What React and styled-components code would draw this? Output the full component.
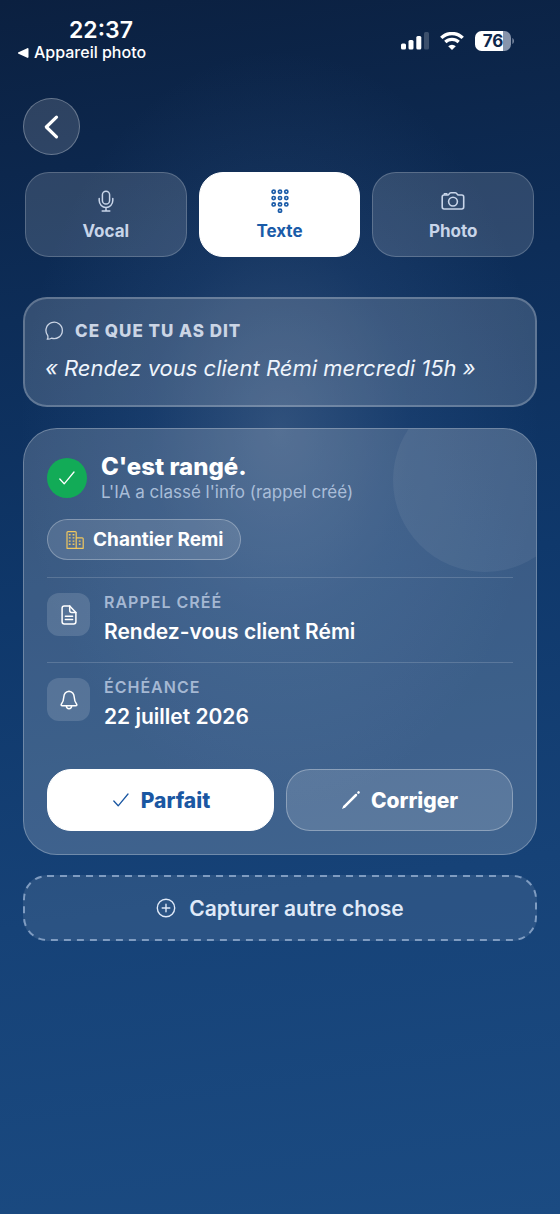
import React, { useState } from "react";
import { createGlobalStyle, styled } from "styled-components";

const MicIcon = () => (
  <Icon width="24" height="24" viewBox="0 0 24 24" strokeWidth="1.5">
    <rect x="8.4" y="2.2" width="7.2" height="12.8" rx="3.6" />
    <path d="M5.2 9.4v2.200a6.800 6.800 0 0 0 13.600 0V9.400M12 18.400v3.600M8.200 22h7.600" />
  </Icon>
);

const KeypadIcon = () => {
  const dots = [2.8, 9.1, 15.4].flatMap((y) =>
    [5.7, 12, 18.3].map((x) => [x, y]),
  );
  return (
    <Icon width="24" height="24" viewBox="0 0 24 24" strokeWidth="1.7">
      {[...dots, [12, 21.7]].map(([x, y]) => (
        <circle key={`${x}-${y}`} cx={x} cy={y} r="1.6" />
      ))}
    </Icon>
  );
};

const CameraIcon = () => (
  <Icon width="24" height="24" viewBox="0 0 24 24" strokeWidth="1.6">
    <path d="M3 6h3.6c.8 0 1.200-.4 1.600-1.100.4-.8.9-1.200 1.700-1.200h4.400c.8 0 1.300.4 1.700 1.200.4.7.8 1.100 1.600 1.100h3.200c1.200 0 1.900.7 1.900 1.900v10.200c0 1.200-.7 1.900-1.900 1.900H3.100c-1.200 0-1.900-.7-1.900-1.900V7.900C1.200 6.700 1.900 6 3 6Z" />
    <path d="M3.400 5.300v-.6h2.400v.6" />
    <circle cx="12" cy="12.600" r="4.400" />
  </Icon>
);

const BubbleIcon = () => (
  <Icon width="20" height="20" viewBox="0 0 20 20" strokeWidth="1.3">
    <path d="M2.200 18.200c.9-.9.900-2.200.5-3.700A8.200 8.200 0 1 1 6.500 17.200c-1.300.8-2.800 1.100-4.300 1Z" />
  </Icon>
);

const CheckIcon = () => (
  <Icon width="20" height="20" viewBox="0 0 20 20" strokeWidth="1.3">
    <path d="m2.800 11 4.400 4.800L17 4" />
  </Icon>
);

const BuildingIcon = () => (
  <Icon width="20" height="20" viewBox="0 0 20 20" strokeWidth="1.200">
    <path d="M2 18.300V2.600c0-.7.300-1 1-1h7.200c.7 0 1 .3 1 1v15.700ZM11.200 7.800h6c.7 0 1 .3 1 1v9.500h-7Z" />
    <path
      d="M4.700 4v1.400M8.500 4v1.400M4.700 7.200v1.400M8.500 7.200v1.400M4.700 10.400v1.400M8.500 10.400v1.400M4.700 13.600V15M8.500 13.600V15M14.700 10.400v1.400M14.700 13.600V15"
      strokeWidth="1.800"
      strokeLinecap="butt"
    />
  </Icon>
);

const DocumentIcon = () => (
  <Icon width="22" height="22" viewBox="0 0 22 22" strokeWidth="1.5">
    <path d="M11.700 2H6.300C4.900 2 4.100 2.800 4.100 4.200v13.600c0 1.400.8 2.200 2.200 2.200h9.400c1.400 0 2.200-.8 2.200-2.200V8.400Z" />
    <path d="M11.700 2v4.500c0 1.300.6 1.900 1.900 1.900h4.300M7.400 12.200h7.200M7.400 15.600h7.200" />
  </Icon>
);

const BellIcon = () => (
  <Icon width="22" height="22" viewBox="0 0 22 22" strokeWidth="1.5">
    <path d="M11 2.200C7.700 2.600 6 4.800 5.800 8c-.2 3.600-.8 5-2.200 6.700-.9 1.100-.5 2.100.8 2.100h13.200c1.300 0 1.700-1 .8-2.100C17 13 16.400 11.600 16.200 8 16 4.800 14.300 2.600 11 2.200ZM8.300 17c.2 1.800 1.200 2.700 2.700 2.700s2.500-.9 2.700-2.700" />
  </Icon>
);

const PencilIcon = () => (
  <Icon width="20" height="20" viewBox="0 0 20 20" strokeWidth="2.500">
    <path d="M3.400 16.600 15 5M17.400 2.600l.2-.2" />
    <path d="m1 19 1.400-3.400 2 2Z" fill="currentColor" stroke="none" />
  </Icon>
);

const PlusCircleIcon = () => (
  <Icon width="20" height="20" viewBox="0 0 20 20" strokeWidth="1.400">
    <circle cx="10" cy="10" r="8.700" />
    <path d="M10 6.200v7.600M6.200 10h7.600" />
  </Icon>
);

const BackIcon = () => (
  <Icon width="28" height="28" viewBox="0 0 28 28" strokeWidth="3.200">
    <path d="M18.500 4.200 8.300 14l10.200 9.800" />
  </Icon>
);

const SignalIcon = () => (
  <svg width="28" height="18" viewBox="0 0 28 18" fill="#fff">
    <rect y="11.500" width="5" height="6" rx="1.500" />
    <rect x="7.500" y="8" width="5" height="9.500" rx="1.500" />
    <rect x="15.300" y="4" width="5" height="13.500" rx="1.500" />
    <rect x="23" width="5" height="17.500" rx="1.500" opacity=".2" />
  </svg>
);

const WifiIcon = () => (
  <svg width="24" height="18" viewBox="0 0 24 18" fill="none" stroke="#fff">
    <path d="M1.300 5.900a15.300 15.300 0 0 1 21.400 0" strokeWidth="3.400" />
    <path d="M5.300 10a9.600 9.600 0 0 1 13.400 0" strokeWidth="3.200" />
    <path d="M12 18 8.200 14.200a5.400 5.400 0 0 1 7.600 0Z" fill="#fff" stroke="none" />
  </svg>
);

const BatteryIcon = () => (
  <svg width="40" height="20" viewBox="0 0 40 20">
    <path d="M28 0h1.500a6.500 6.500 0 0 1 6.500 6.500v7a6.500 6.500 0 0 1-6.500 6.500H28Z" fill="#8794ab" />
    <path d="M28 0v20H6.500A6.500 6.500 0 0 1 0 13.500v-7A6.500 6.500 0 0 1 6.500 0Z" fill="#fff" />
    <path d="M37.300 7c2.300.8 2.300 5.200 0 6Z" fill="#75839c" />
    <BatteryText x="18" y="16" textAnchor="middle">
      76
    </BatteryText>
  </svg>
);

const tabs = [
  { id: "vocal", label: "Vocal", icon: <MicIcon /> },
  { id: "texte", label: "Texte", icon: <KeypadIcon /> },
  { id: "photo", label: "Photo", icon: <CameraIcon /> },
];

const details = [
  { label: "Rappel créé", value: "Rendez-vous client Rémi", icon: <DocumentIcon /> },
  { label: "Échéance", value: "22 juillet 2026", icon: <BellIcon /> },
];

const App = () => {
  const [activeTab, setActiveTab] = useState("texte");

  return (
    <>
      <GlobalStyle />
      <StatusBar>
        <Clock>
          <Time>22:37</Time>
          <ReturnLink href="#photo">
            <svg width="11" height="10" viewBox="0 0 11 10" fill="#fff">
              <path d="M.5 4.300 9.300.2c.7-.3 1.200 0 1.200.7v8.200c0 .7-.5 1-1.200.7L.5 5.700c-.7-.4-.7-1 0-1.400Z" />
            </svg>
            Appareil photo
          </ReturnLink>
        </Clock>
        <Indicators>
          <SignalIcon />
          <WifiIcon />
          <BatteryIcon />
        </Indicators>
      </StatusBar>

      <Main>
        <BackButton aria-label="Retour">
          <BackIcon />
        </BackButton>

        <Tabs>
          {tabs.map((tab) => (
            <Tab
              key={tab.id}
              $active={tab.id === activeTab}
              aria-pressed={tab.id === activeTab}
              onClick={() => setActiveTab(tab.id)}
            >
              {tab.icon}
              {tab.label}
            </Tab>
          ))}
        </Tabs>

        <QuoteCard>
          <QuoteTitle>
            <BubbleIcon />
            Ce que tu as dit
          </QuoteTitle>
          <Quote>« Rendez vous client Rémi mercredi 15h »</Quote>
        </QuoteCard>

        <ResultCard>
          <Halo />
          <ResultHeader>
            <Success>
              <CheckIcon />
            </Success>
            <div>
              <ResultTitle>C'est rangé.</ResultTitle>
              <ResultText>L'IA a classé l'info (rappel créé)</ResultText>
            </div>
          </ResultHeader>
          <Chip>
            <BuildingIcon />
            Chantier Remi
          </Chip>
          {details.map((detail) => (
            <Row key={detail.label}>
              <RowIcon>{detail.icon}</RowIcon>
              <div>
                <RowLabel>{detail.label}</RowLabel>
                <RowValue>{detail.value}</RowValue>
              </div>
            </Row>
          ))}
          <Actions>
            <ActionButton $primary>
              <CheckIcon />
              Parfait
            </ActionButton>
            <ActionButton>
              <PencilIcon />
              Corriger
            </ActionButton>
          </Actions>
        </ResultCard>

        <CaptureButton>
          <svg width="100%" height="100%" aria-hidden="true">
            <rect width="100%" height="100%" rx="24" />
          </svg>
          <PlusCircleIcon />
          Capturer autre chose
        </CaptureButton>
      </Main>
    </>
  );
};

export default App;

const GlobalStyle = createGlobalStyle`
  * {
    box-sizing: border-box;
  }

  body {
    margin: 0;
    min-height: 100vh;
    color: #fff;
    font-family: Inter, "Liberation Sans", sans-serif;
    background:
      radial-gradient(ellipse 260px 380px at 50% 430px, rgba(135, 160, 195, 0.28), rgba(90, 130, 185, 0.13) 50%, transparent),
      linear-gradient(172deg, #0b2040 0%, #0d2d58 25%, #0f386b 48%, #164277 72%, #1b4b82 100%);
  }

  button {
    color: inherit;
    font-family: inherit;
    cursor: pointer;
  }
`;

const Icon = styled.svg`
  flex-shrink: 0;
  fill: none;
  stroke: currentColor;
  stroke-linecap: round;
  stroke-linejoin: round;
`;

const StatusBar = styled.header`
  display: flex;
  justify-content: space-between;
  padding: 18px 45px 0 18px;
`;

const Clock = styled.div`
  display: flex;
  flex-direction: column;
  align-items: flex-start;
`;

const Time = styled.div`
  padding-left: 51px;
  font-size: 23px;
  font-weight: 600;
  line-height: 25px;
`;

const ReturnLink = styled.a`
  display: flex;
  align-items: center;
  gap: 5px;
  color: #fff;
  font-size: 16px;
  font-weight: 500;
  line-height: 19px;
  text-decoration: none;
`;

const Indicators = styled.div`
  display: flex;
  align-items: center;
  gap: 11px;
  padding-top: 2px;
`;

const BatteryText = styled.text`
  fill: #0d274b;
  font-size: 17px;
  font-weight: 700;
`;

const Main = styled.main`
  display: flex;
  flex-direction: column;
  padding: 36px 23px 24px;
`;

const BackButton = styled.button`
  display: flex;
  align-items: center;
  justify-content: center;
  width: 57px;
  height: 57px;
  padding: 0;
  border: 1px solid rgba(255, 255, 255, 0.28);
  border-radius: 50%;
  background-color: rgba(255, 255, 255, 0.14);
`;

const Tabs = styled.div`
  display: flex;
  gap: 12px;
  margin: 17px 3px 40px 2px;
`;

const Tab = styled.button`
  display: flex;
  flex: 1;
  flex-direction: column;
  align-items: center;
  gap: 7px;
  padding: 16px 0 14px;
  border: 1px solid ${(props) => (props.$active ? "#fff" : "rgba(255, 255, 255, 0.2)")};
  border-radius: 24px;
  background-color: ${(props) => (props.$active ? "#fff" : "rgba(255, 255, 255, 0.14)")};
  && {
    color: ${(props) => (props.$active ? "#1a5ba8" : "#c8d5e9")};
  }
  font-size: 17px;
  font-weight: 700;
  line-height: 22px;
`;

const QuoteCard = styled.section`
  padding: 20px 20px 22px;
  border: 2px solid rgba(255, 255, 255, 0.22);
  border-radius: 24px;
  background-color: rgba(255, 255, 255, 0.16);
`;

const QuoteTitle = styled.h2`
  display: flex;
  align-items: center;
  gap: 10px;
  margin: 0 0 10px;
  color: #cbd5e5;
  font-size: 17px;
  font-weight: 800;
  letter-spacing: 1px;
  line-height: 24px;
  text-transform: uppercase;
`;

const Quote = styled.p`
  margin: 0;
  color: #eef4fc;
  font-size: 22px;
  font-style: italic;
  line-height: 30px;
`;

const ResultCard = styled.section`
  position: relative;
  overflow: hidden;
  margin: 21px 0 20px;
  padding: 24px 23px 23px;
  border: 1px solid rgba(255, 255, 255, 0.26);
  border-radius: 34px;
  background-color: rgba(255, 255, 255, 0.18);
`;

const Halo = styled.div`
  position: absolute;
  top: -41px;
  right: -41px;
  width: 184px;
  height: 184px;
  border-radius: 50%;
  background-color: rgba(255, 255, 255, 0.06);
`;

const ResultHeader = styled.div`
  display: flex;
  align-items: center;
  gap: 14px;
`;

const Success = styled.div`
  display: flex;
  align-items: center;
  justify-content: center;
  width: 40px;
  height: 40px;
  border-radius: 50%;
  background-color: #12ab57;
`;

const ResultTitle = styled.h1`
  margin: 0;
  font-size: 24px;
  font-weight: 800;
  line-height: 28px;
`;

const ResultText = styled.p`
  margin: 0;
  color: #a9bdd8;
  font-size: 17px;
  line-height: 22px;
`;

const Chip = styled.div`
  display: inline-flex;
  align-items: center;
  gap: 8px;
  height: 41px;
  margin: 16px 0 17px;
  padding: 0 17px;
  border: 1px solid rgba(255, 255, 255, 0.28);
  border-radius: 21px;
  background-color: rgba(255, 255, 255, 0.12);
  font-size: 19px;
  font-weight: 700;

  svg {
    color: #f0c75e;
  }
`;

const Row = styled.div`
  display: flex;
  gap: 14px;
  padding: 15px 0 16px;
  border-top: 1px solid rgba(255, 255, 255, 0.16);
`;

const RowIcon = styled.div`
  display: flex;
  align-items: center;
  justify-content: center;
  width: 43px;
  height: 43px;
  border-radius: 12px;
  background-color: rgba(255, 255, 255, 0.14);
`;

const RowLabel = styled.div`
  color: #a5b8d3;
  font-size: 16px;
  font-weight: 600;
  letter-spacing: 1px;
  line-height: 18px;
  text-transform: uppercase;
`;

const RowValue = styled.div`
  margin-top: 7px;
  font-size: 21px;
  font-weight: 600;
  line-height: 28px;
`;

const Actions = styled.div`
  display: flex;
  gap: 12px;
  margin-top: 22px;
`;

const ActionButton = styled.button`
  display: flex;
  flex: 1;
  align-items: center;
  justify-content: center;
  gap: 10px;
  height: 62px;
  padding: 0;
  border: 1px solid ${(props) => (props.$primary ? "#fff" : "rgba(255, 255, 255, 0.3)")};
  border-radius: 24px;
  background-color: ${(props) => (props.$primary ? "#fff" : "rgba(255, 255, 255, 0.14)")};
  && {
    color: ${(props) => (props.$primary ? "#1a57a2" : "#fff")};
  }
  font-size: 21px;
  font-weight: 800;
`;

const CaptureButton = styled.button`
  position: relative;
  display: flex;
  align-items: center;
  justify-content: center;
  gap: 13px;
  height: 66px;
  padding: 0;
  border: none;
  border-radius: 24px;
  background-color: rgba(255, 255, 255, 0.09);
  && {
    color: #dfe9f8;
  }
  font-size: 21px;
  font-weight: 600;

  /* dashed outline, clipped to half of its stroke by the rounded box */
  > svg:first-child {
    position: absolute;
    inset: 0;
    border-radius: 24px;
    fill: none;
    stroke: #7f9cc1;
    stroke-width: 4px;
    stroke-dasharray: 7 6;
  }
`;
